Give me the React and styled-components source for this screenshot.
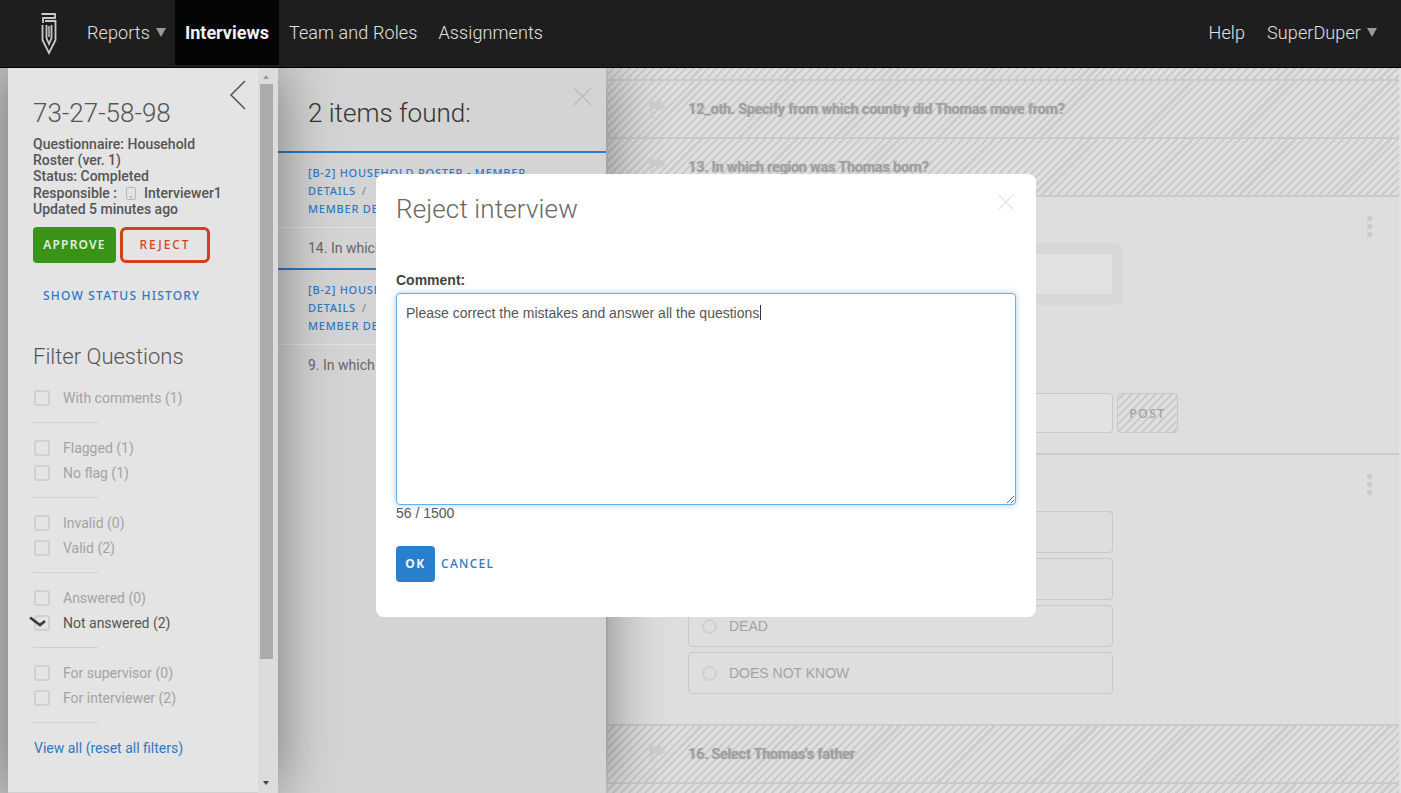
import React, { useEffect, useRef } from 'react';
import styled, { createGlobalStyle, css } from 'styled-components';

const BLUE = '#2a7bc4';
const ROBOTO = 'Roboto, "Liberation Sans", sans-serif';
const ARIAL = '"Liberation Sans", Arial, sans-serif';
const LABEL = '"Noto Sans", "Open Sans", sans-serif';

const FILTER_GROUPS = [
  [{ label: 'With comments (1)' }],
  [{ label: 'Flagged (1)' }, { label: 'No flag (1)' }],
  [{ label: 'Invalid (0)' }, { label: 'Valid (2)' }],
  [{ label: 'Answered (0)' }, { label: 'Not answered (2)', checked: true }],
  [{ label: 'For supervisor (0)' }, { label: 'For interviewer (2)' }],
];

const hatch = css`
  background: repeating-linear-gradient(135deg, #dfdfdf 0 3.4px, #cbcbcd 3.4px 5.6px);
`;

const GlobalStyle = createGlobalStyle`
  html, body { margin: 0; padding: 0; height: 100%; overflow: hidden; }
  body { font-family: ${ROBOTO}; background: #dedede; }
  * { box-sizing: border-box; }
`;

const Page = styled.div`
  height: 793px;
  display: flex;
  flex-direction: column;
  overflow: hidden;
  position: relative;
`;

const Nav = styled.header`
  height: 68px;
  flex: none;
  display: flex;
  align-items: stretch;
  background: #1e1e1e;
  border-bottom: 1px solid #000;
  position: relative;
  z-index: 5;
  padding-left: 41px;
`;

const Logo = styled.svg`
  width: 16px;
  height: 42px;
  margin: 13px 30px 0 0;
`;

const NavItem = styled.a`
  display: flex;
  align-items: center;
  height: 65px;
  padding: 0 ${p => (p.$active ? '10px' : '0')};
  margin-right: ${p => p.$gap || 21}px;
  font-size: 18px;
  font-weight: ${p => (p.$active ? 700 : 300)};
  letter-spacing: ${p => (p.$active ? 0 : 0.1)}px;
  color: ${p => (p.$active ? '#f2f2f2' : '#e2e2e2')};
  background: ${p => (p.$active ? '#050505' : 'transparent')};
  white-space: nowrap;
`;

const Caret = styled.span`
  width: 0;
  height: 0;
  margin-left: 6px;
  margin-top: -1px;
  border-left: 5.5px solid transparent;
  border-right: 5.5px solid transparent;
  border-top: 9px solid #9a9a9a;
`;

const NavRight = styled.div`
  margin-left: auto;
  display: flex;
  padding-right: 3px;
`;

const Body = styled.div`
  flex: 1;
  min-height: 0;
  display: flex;
  background: #c3c7ca;
  padding-left: 8px;
`;

const Sidebar = styled.aside`
  width: 270px;
  flex: none;
  display: flex;
  background: #e4e4e4;
  box-shadow: 0 0 55px rgba(0, 0, 0, 0.45);
  position: relative;
  z-index: 3;
`;

const SideContent = styled.div`
  width: 250px;
  flex: none;
  padding: 30px 0 0 25px;
  position: relative;
  border-bottom: 1px solid #d0d0d0;
`;

const Back = styled.svg`
  position: absolute;
  top: 12px;
  right: 11px;
  width: 18px;
  height: 30px;
`;

const Code = styled.h1`
  margin: 0 0 8px;
  font-size: 26px;
  line-height: 30px;
  font-weight: 300;
  color: #555;
`;

const Info = styled.div`
  font-size: 14px;
  line-height: 16.2px;
  font-weight: 500;
  color: #555;
  width: 200px;
`;

const DeviceIcon = styled.span`
  display: inline-block;
  position: relative;
  width: 10px;
  height: 13px;
  margin: 0 8px 0 9px;
  vertical-align: -2px;
  border: 1.5px solid #b5b5b5;
  border-radius: 2px;
  &::after {
    content: '';
    position: absolute;
    left: 2.5px;
    bottom: 1px;
    width: 2px;
    height: 2px;
    background: #b5b5b5;
  }
`;

const Actions = styled.div`
  display: flex;
  gap: 4px;
  margin-top: 10px;
`;

const ActionButton = styled.button`
  height: 36px;
  width: ${p => p.$width}px;
  padding: 0 0 ${p => (p.$danger ? 1 : 2)}px;
  border-radius: ${p => (p.$danger ? 6 : 4)}px;
  font-family: ${LABEL};
  font-size: 12px;
  font-weight: ${p => (p.$danger ? 500 : 600)};
  letter-spacing: ${p => (p.$danger ? 1.9 : 1.2)}px;
  color: ${p => (p.$danger ? '#d5441f' : '#e4eedd')};
  background: ${p => (p.$danger ? 'transparent' : '#379417')};
  border: ${p => (p.$danger ? '3px solid #d13f1f' : 'none')};
`;

const HistoryLink = styled.a`
  display: block;
  margin: 24px 0 0 10px;
  font-family: ${LABEL};
  font-size: 12px;
  line-height: 18px;
  font-weight: 500;
  letter-spacing: 1.2px;
  color: ${BLUE};
  white-space: nowrap;
`;

const FilterTitle = styled.h2`
  margin: 38px 0 19px;
  font-size: 22px;
  line-height: 28px;
  font-weight: 300;
  color: #555;
`;

const FilterGroup = styled.div`
  display: flex;
  flex-direction: column;
  gap: 9px;
  padding-bottom: 16px;
  margin-bottom: 17px;
  width: 65px;
  border-bottom: 1px solid #d0d0d0;
`;

const FilterRow = styled.label`
  display: flex;
  align-items: center;
  height: 16px;
  width: 200px;
  font-size: 14px;
  color: ${p => (p.$checked ? '#555' : '#a3a3a3')};
  white-space: nowrap;
`;

const Box = styled.span`
  flex: none;
  position: relative;
  width: 16px;
  height: 16px;
  margin: 0 13px 0 1px;
  border: 2px solid #d0d0d0;
  border-radius: 3px;
`;

const Tick = styled.svg`
  position: absolute;
  left: -7px;
  top: -1px;
  width: 18px;
  height: 12px;
`;

const ResetLink = styled.a`
  display: block;
  margin-left: 1px;
  font-size: 14px;
  color: ${BLUE};
`;

const Scrollbar = styled.div`
  width: 20px;
  flex: none;
  background: #dcdcdc;
  display: flex;
  flex-direction: column;
  align-items: flex-start;
  padding-top: 7px;
`;

const Arrow = styled.span`
  width: 0;
  height: 0;
  margin-left: 5px;
  border-left: 3.5px solid transparent;
  border-right: 3.5px solid transparent;
  ${p => (p.$down ? 'border-top: 4px solid #444; margin-top: 122px;' : 'border-bottom: 4px solid #999;')}
`;

const Thumb = styled.div`
  width: 13px;
  height: 575px;
  margin: 5px 0 0 2px;
  background: #ababab;
`;

const SearchPanel = styled.section`
  width: 328px;
  flex: none;
  background: #d4d4d4;
  box-shadow: 0 0 55px rgba(0, 0, 0, 0.45);
  position: relative;
  z-index: 2;
`;

const SearchTitle = styled.h2`
  margin: 0;
  height: 83px;
  padding: 30px 0 0 30px;
  font-size: 26px;
  line-height: 30px;
  font-weight: 300;
  color: #333;
`;

const CloseIcon = styled.svg`
  position: absolute;
  top: ${p => p.$top}px;
  right: ${p => p.$right}px;
  width: ${p => p.$size}px;
  height: ${p => p.$size}px;
`;

const Result = styled.div`
  border-top: 2px solid ${BLUE};
`;

const Crumbs = styled.div`
  padding: 11px 20px 9px 30px;
  border-bottom: 1px solid #e2e2e2;
  font-family: ${LABEL};
  font-size: 11px;
  line-height: 18px;
  font-weight: 500;
  letter-spacing: 0.75px;
  color: ${BLUE};
`;

const Slash = styled.span`
  color: #8a8a8a;
  margin-left: 6px;
`;

const ResultText = styled.div`
  height: 40px;
  padding: 12px 0 0 30px;
  font-size: 14px;
  line-height: 16px;
  color: #666;
  white-space: nowrap;
`;

const Main = styled.main`
  flex: 1;
  min-width: 0;
  border-left: 2px solid #d2d3d5;
  border-right: 2px solid #e2e2e2;
  display: flex;
  flex-direction: column;
  background: #dedede;
`;

const HatchRow = styled.div`
  ${hatch}
  flex: none;
  height: ${p => p.$height}px;
  display: flex;
  align-items: center;
  padding-left: 40px;
  border-bottom: 2px solid #c8cacc;
`;

const Flag = styled.svg`
  width: 18px;
  height: 20px;
  flex: none;
  margin-right: 22px;
`;

const RowTitle = styled.span`
  font-size: 14px;
  font-weight: 500;
  color: #a0a0a2;
  text-shadow: 1px 0 1px rgba(120, 120, 125, 0.6);
  white-space: nowrap;
`;

const Block = styled.div`
  flex: none;
  height: ${p => p.$height}px;
  padding: ${p => p.$top}px 0 0 80px;
  position: relative;
  border-bottom: 2px solid #c8cacc;
`;

const Dots = styled.span`
  position: absolute;
  top: ${p => p.$top}px;
  right: 27px;
  display: flex;
  flex-direction: column;
  gap: 3px;
  & > i {
    width: 5px;
    height: 5px;
    border-radius: 50%;
    background: #c8c9cb;
  }
`;

const AnswerFrame = styled.div`
  width: 435px;
  height: 62px;
  border: 11px solid #d6d7d9;
  border-radius: 8px;
  background: #e1e1e1;
`;

const PostRow = styled.div`
  display: flex;
  gap: 4px;
  margin-top: 88px;
`;

const PostInput = styled.div`
  width: 425px;
  height: 40px;
  border: 1px solid #c8c8c8;
  border-radius: 4px;
  background: #e2e2e2;
`;

const PostButton = styled.div`
  ${hatch}
  width: 61px;
  height: 40px;
  display: flex;
  align-items: center;
  justify-content: center;
  border: 1px solid #c8c8c8;
  border-radius: 4px;
  font-family: ${LABEL};
  font-size: 12px;
  font-weight: 500;
  letter-spacing: 1.5px;
  color: #a0a0a0;
`;

const Options = styled.div`
  display: flex;
  flex-direction: column;
  gap: 5px;
  width: 425px;
`;

const Option = styled.div`
  height: 42px;
  display: flex;
  align-items: center;
  padding-left: 13px;
  border: 1px solid #c8c8c8;
  border-radius: 4px;
  font-family: ${ARIAL};
  font-size: 14px;
  color: #a3a3a3;
`;

const Radio = styled.span`
  width: 15px;
  height: 15px;
  margin-right: 12px;
  border: 2px solid #cfcfcf;
  border-radius: 50%;
`;

const Modal = styled.div`
  position: absolute;
  top: 174px;
  left: 376px;
  z-index: 10;
  width: 660px;
  height: 443px;
  padding: 20px 20px 0;
  background: #fff;
  border-radius: 8px;
`;

const ModalTitle = styled.h3`
  margin: 0;
  font-size: 26px;
  line-height: 30px;
  font-weight: 300;
  letter-spacing: 0.13px;
  color: #666;
`;

const FieldLabel = styled.label`
  display: block;
  margin-top: 48px;
  font-family: ${ARIAL};
  font-size: 14px;
  line-height: 16px;
  font-weight: 700;
  color: #444;
`;

const CommentWrap = styled.div`
  position: relative;
  margin-top: 5px;
`;

const Comment = styled.textarea`
  display: block;
  width: 620px;
  height: 212px;
  padding: 9px 9px;
  font-family: ${ARIAL};
  font-size: 14px;
  line-height: 20px;
  color: #555;
  background: #fff;
  border: 1px solid #66afe9;
  border-radius: 4px;
  outline: none;
  caret-color: transparent;
  box-shadow: 0 0 6px rgba(102, 175, 233, 0.6);
`;

// headless browsers don't paint the native caret, the reference has one
const TextCaret = styled.span`
  position: absolute;
  left: 364px;
  top: 12px;
  width: 1px;
  height: 15px;
  background: #333;
`;

const Counter = styled.div`
  margin-top: 0;
  font-family: ${ARIAL};
  font-size: 14px;
  line-height: 16px;
  color: #555;
`;

const ModalActions = styled.div`
  display: flex;
  align-items: center;
  gap: 6px;
  margin-top: 25px;
`;

const OkButton = styled.button`
  width: 39px;
  height: 36px;
  padding: 0 0 2px;
  border: none;
  border-radius: 4px;
  background: #2a7fcc;
  color: #eef5fb;
  font-family: ${LABEL};
  font-size: 12px;
  font-weight: 700;
  letter-spacing: 1.4px;
`;

const CancelLink = styled.a`
  margin-top: -2px;
  font-family: ${LABEL};
  font-size: 12px;
  font-weight: 500;
  letter-spacing: 1.3px;
  color: ${BLUE};
`;

const FlagIcon = () => (
  <Flag viewBox="0 0 18 20">
    <path d="M0 1 L9 3 L11 1 L18 8 L10 12 L8 9 L4 11 L6 19 L4 19 Z" fill="#cdced0" />
  </Flag>
);

const X = ({ top, right, size, color }) => (
  <CloseIcon $top={top} $right={right} $size={size} viewBox="0 0 20 20">
    <path d="M1 1 L19 19 M19 1 L1 19" stroke={color} strokeWidth="1.6" fill="none" />
  </CloseIcon>
);

const MenuDots = ({ top }) => (
  <Dots $top={top}>
    <i />
    <i />
    <i />
  </Dots>
);

const Filters = () => (
  <>
    {FILTER_GROUPS.map((group, i) => (
      <FilterGroup key={i}>
        {group.map(item => (
          <FilterRow key={item.label} $checked={item.checked}>
            <Box>
              {item.checked && (
                <Tick viewBox="0 0 18 12">
                  <path d="M1 1.5 L11 9 L16 5" stroke="#3a3a3a" strokeWidth="2.6" fill="none" />
                </Tick>
              )}
            </Box>
            {item.label}
          </FilterRow>
        ))}
      </FilterGroup>
    ))}
  </>
);

const App = () => {
  const commentRef = useRef(null);

  useEffect(() => {
    const el = commentRef.current;
    if (el) {
      el.focus();
      el.setSelectionRange(el.value.length, el.value.length);
    }
  }, []);

  return (
    <Page>
      <GlobalStyle />
      <Nav>
        <Logo viewBox="0 0 16 42">
          <g fill="none" stroke="#c9c9c9" strokeWidth="1.8">
            <path d="M0.5 1 H14 V5 H2 V10" />
            <path d="M4 8 H14.5 V27 L8 40 L1.5 27 V12" />
            <path d="M5.5 12 V25 L8 31 L10.5 25 V12" />
          </g>
          <path d="M7 13 H9 V24 H7 Z" fill="#9a9a9a" />
        </Logo>
        <NavItem $gap={9}>
          Reports
          <Caret />
        </NavItem>
        <NavItem $active $gap={10}>Interviews</NavItem>
        <NavItem $gap={21}>Team and Roles</NavItem>
        <NavItem>Assignments</NavItem>
        <NavRight>
          <NavItem $gap={22}>Help</NavItem>
          <NavItem $gap={21}>
            SuperDuper
            <Caret />
          </NavItem>
        </NavRight>
      </Nav>
      <Body>
        <Sidebar>
          <SideContent>
            <Back viewBox="0 0 18 30">
              <path d="M16 1 L2 15 L16 29" stroke="#555" strokeWidth="1.5" fill="none" />
            </Back>
            <Code>73-27-58-98</Code>
            <Info>
              Questionnaire: Household Roster (ver. 1)
              <br />
              Status: Completed
              <br />
              Responsible :<DeviceIcon />
              Interviewer1
              <br />
              Updated 5 minutes ago
            </Info>
            <Actions>
              <ActionButton $width={83}>APPROVE</ActionButton>
              <ActionButton $width={90} $danger>REJECT</ActionButton>
            </Actions>
            <HistoryLink>SHOW STATUS HISTORY</HistoryLink>
            <FilterTitle>Filter Questions</FilterTitle>
            <Filters />
            <ResetLink>View all (reset all filters)</ResetLink>
          </SideContent>
          <Scrollbar>
            <Arrow />
            <Thumb />
            <Arrow $down />
          </Scrollbar>
        </Sidebar>
        <SearchPanel>
          <SearchTitle>2 items found:</SearchTitle>
          <X top={19} right={14} size={19} color="#bdbdbd" />
          <Result>
            <Crumbs>
              [B-2] HOUSEHOLD ROSTER - MEMBER DETAILS<Slash>/</Slash>
              <br />
              MEMBER DETAILS
            </Crumbs>
            <ResultText>14. In which</ResultText>
          </Result>
          <Result>
            <Crumbs>
              [B-2] HOUSEHOLD ROSTER - MEMBER DETAILS<Slash>/</Slash>
              <br />
              MEMBER DETAILS
            </Crumbs>
            <ResultText>9. In which</ResultText>
          </Result>
        </SearchPanel>
        <Main>
          <HatchRow $height={13} />
          <HatchRow $height={58}>
            <FlagIcon />
            <RowTitle>12_oth. Specify from which country did Thomas move from?</RowTitle>
          </HatchRow>
          <HatchRow $height={58}>
            <FlagIcon />
            <RowTitle>13. In which region was Thomas born?</RowTitle>
          </HatchRow>
          <Block $height={258} $top={46}>
            <MenuDots top={19} />
            <AnswerFrame />
            <PostRow>
              <PostInput />
              <PostButton>POST</PostButton>
            </PostRow>
          </Block>
          <Block $height={271} $top={56}>
            <MenuDots top={19} />
            <Options>
              <Option />
              <Option />
              <Option>
                <Radio />
                DEAD
              </Option>
              <Option>
                <Radio />
                DOES NOT KNOW
              </Option>
            </Options>
          </Block>
          <HatchRow $height={58}>
            <FlagIcon />
            <RowTitle>16. Select Thomas's father</RowTitle>
          </HatchRow>
          <HatchRow $height={58} />
        </Main>
      </Body>
      <Modal>
        <ModalTitle>Reject interview</ModalTitle>
        <X top={20} right={22} size={16} color="#e6e6e6" />
        <FieldLabel>Comment:</FieldLabel>
        <CommentWrap>
          <Comment ref={commentRef} defaultValue="Please correct the mistakes and answer all the questions" />
          <TextCaret />
        </CommentWrap>
        <Counter>56 / 1500</Counter>
        <ModalActions>
          <OkButton>OK</OkButton>
          <CancelLink>CANCEL</CancelLink>
        </ModalActions>
      </Modal>
    </Page>
  );
};

export default App;
